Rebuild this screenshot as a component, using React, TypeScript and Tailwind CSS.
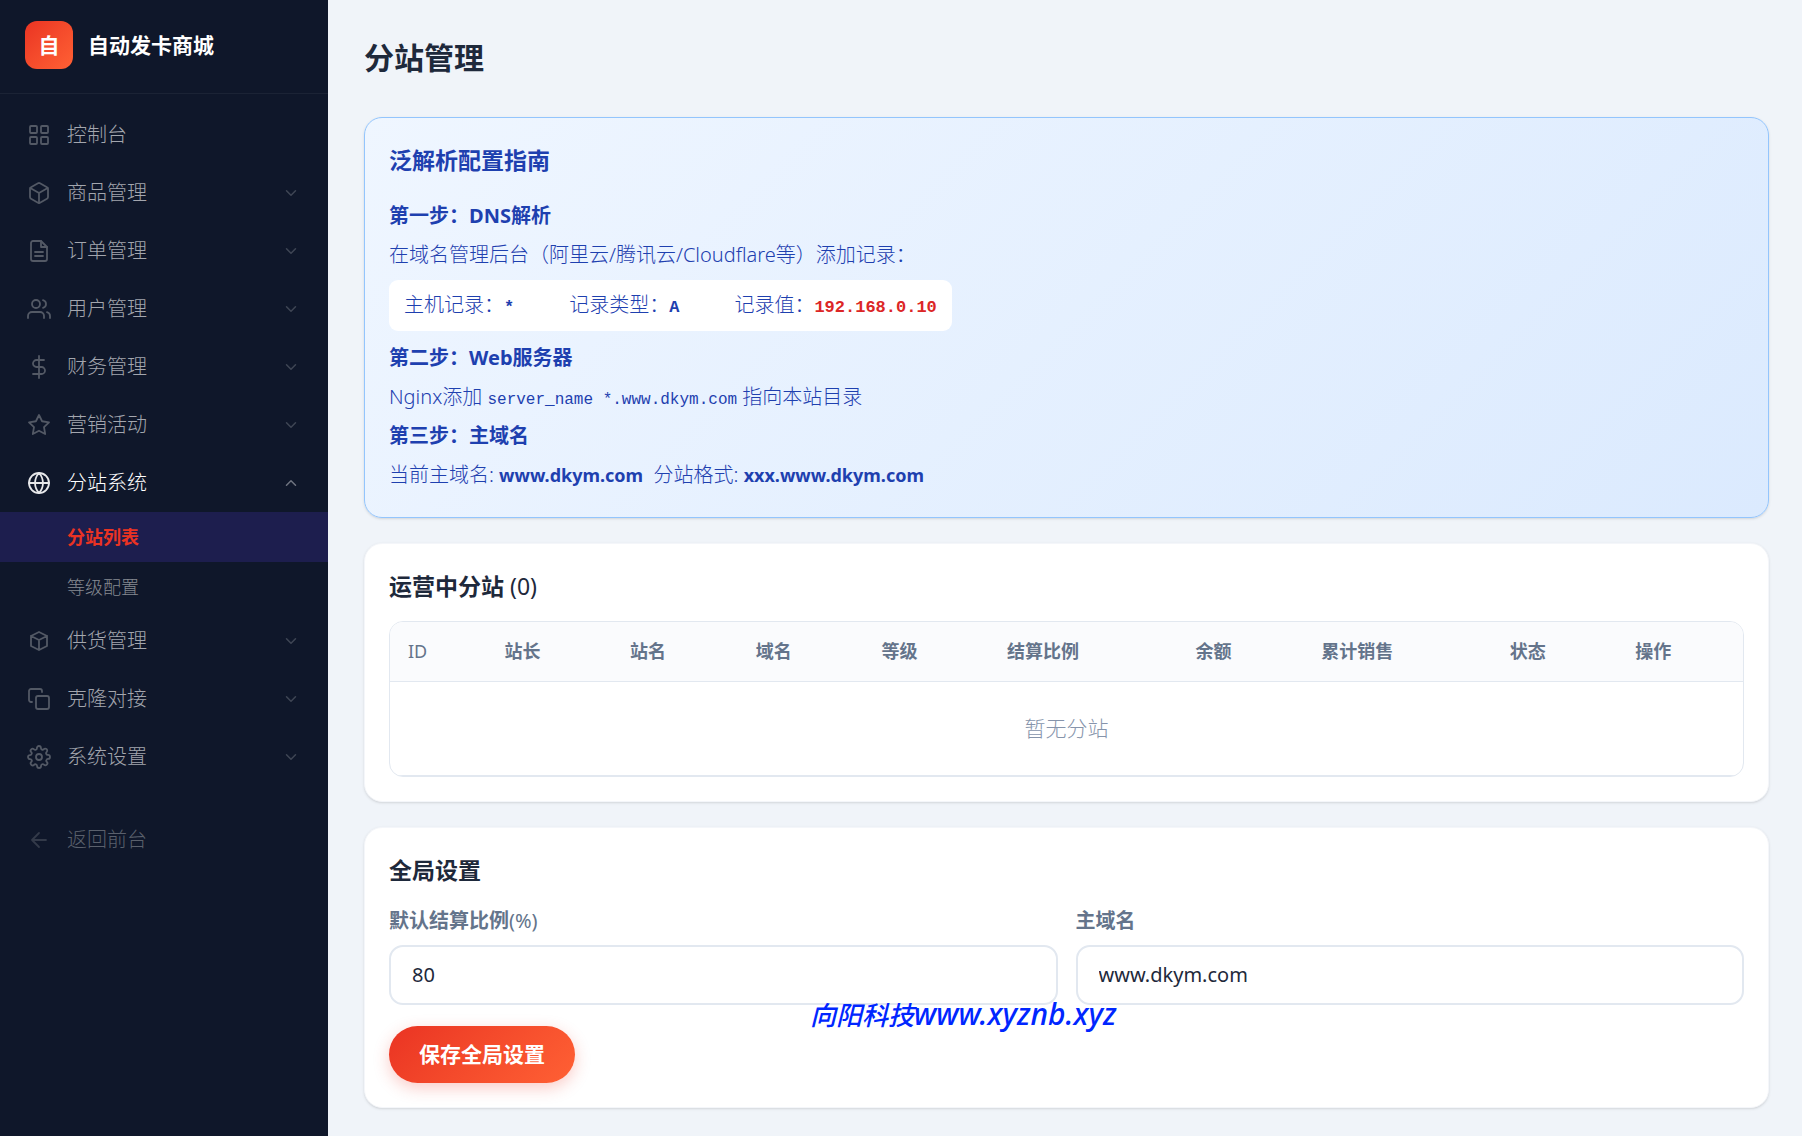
import type { ReactNode } from "react";

type NavItem = {
  label: string;
  icon: ReactNode;
  children?: { label: string; active?: boolean }[];
  open?: boolean;
  single?: boolean;
};

const Icon = ({ children }: { children: ReactNode }) => (
  <svg
    viewBox="0 0 24 24"
    className="size-6 shrink-0"
    fill="none"
    stroke="currentColor"
    strokeWidth="1.8"
    strokeLinecap="round"
    strokeLinejoin="round"
    aria-hidden="true"
  >
    {children}
  </svg>
);

const navItems: NavItem[] = [
  {
    label: "控制台",
    single: true,
    icon: (
      <>
        <rect x="3" y="3" width="7" height="7" rx="1" />
        <rect x="14" y="3" width="7" height="7" rx="1" />
        <rect x="3" y="14" width="7" height="7" rx="1" />
        <rect x="14" y="14" width="7" height="7" rx="1" />
      </>
    ),
  },
  {
    label: "商品管理",
    icon: (
      <>
        <path d="M21 16V8a2 2 0 0 0-1-1.73l-7-4a2 2 0 0 0-2 0l-7 4A2 2 0 0 0 3 8v8a2 2 0 0 0 1 1.73l7 4a2 2 0 0 0 2 0l7-4A2 2 0 0 0 21 16z" />
        <path d="M3.27 6.96 12 12.01l8.73-5.05M12 22.08V12" />
      </>
    ),
  },
  {
    label: "订单管理",
    icon: (
      <>
        <path d="M14 2H6a2 2 0 0 0-2 2v16a2 2 0 0 0 2 2h12a2 2 0 0 0 2-2V8z" />
        <path d="M14 2v6h6M16 13H8M16 17H8" />
      </>
    ),
  },
  {
    label: "用户管理",
    icon: (
      <>
        <path d="M17 21v-2a4 4 0 0 0-4-4H5a4 4 0 0 0-4 4v2" />
        <circle cx="9" cy="7" r="4" />
        <path d="M23 21v-2a4 4 0 0 0-3-3.87M16 3.13a4 4 0 0 1 0 7.75" />
      </>
    ),
  },
  {
    label: "财务管理",
    icon: <path d="M12 1v22M17 5H9.5a3.5 3.5 0 0 0 0 7h5a3.5 3.5 0 0 1 0 7H6" />,
  },
  {
    label: "营销活动",
    icon: (
      <path d="M12 2l3.09 6.26L22 9.27l-5 4.87 1.18 6.88L12 17.77l-6.18 3.25L7 14.14 2 9.27l6.91-1.01L12 2z" />
    ),
  },
  {
    label: "分站系统",
    open: true,
    icon: (
      <>
        <circle cx="12" cy="12" r="10" />
        <path d="M2 12h20M12 2a15.3 15.3 0 0 1 4 10 15.3 15.3 0 0 1-4 10 15.3 15.3 0 0 1-4-10 15.3 15.3 0 0 1 4-10z" />
      </>
    ),
    children: [{ label: "分站列表", active: true }, { label: "等级配置" }],
  },
  {
    label: "供货管理",
    icon: <path d="M20 7l-8-4-8 4m16 0l-8 4m8-4v10l-8 4m0-10L4 7m8 4v10M4 7v10l8 4" />,
  },
  {
    label: "克隆对接",
    icon: (
      <>
        <rect x="9" y="9" width="13" height="13" rx="2" />
        <path d="M5 15H4a2 2 0 0 1-2-2V4a2 2 0 0 1 2-2h9a2 2 0 0 1 2 2v1" />
      </>
    ),
  },
  {
    label: "系统设置",
    icon: (
      <>
        <circle cx="12" cy="12" r="3" />
        <path d="M19.4 15a1.65 1.65 0 0 0 .33 1.82l.06.06a2 2 0 0 1-2.83 2.83l-.06-.06a1.65 1.65 0 0 0-2.82 1.17V21a2 2 0 0 1-4 0v-.09A1.65 1.65 0 0 0 9 19.4a1.65 1.65 0 0 0-1.82.33l-.06.06a2 2 0 0 1-2.83-2.83l.06-.06a1.65 1.65 0 0 0-1.17-2.82H3a2 2 0 0 1 0-4h.09A1.65 1.65 0 0 0 4.6 9a1.65 1.65 0 0 0-.33-1.82l-.06-.06a2 2 0 0 1 2.83-2.83l.06.06a1.65 1.65 0 0 0 2.82-1.17V3a2 2 0 0 1 4 0v.09a1.65 1.65 0 0 0 2.82 1.17l.06-.06a2 2 0 0 1 2.83 2.83l-.06.06a1.65 1.65 0 0 0 1.17 2.82H21a2 2 0 0 1 0 4h-.09A1.65 1.65 0 0 0 19.4 15z" />
      </>
    ),
  },
];

const columns = [
  "ID",
  "站长",
  "站名",
  "域名",
  "等级",
  "结算比例",
  "余额",
  "累计销售",
  "状态",
  "操作",
];

const Chevron = ({ open }: { open?: boolean }) => (
  <svg
    viewBox="0 0 24 24"
    className={open ? "size-[18px] text-[#6f7480]" : "size-[18px] text-[#3f4655]"}
    fill="none"
    stroke="currentColor"
    strokeWidth="2"
    strokeLinecap="round"
    strokeLinejoin="round"
    aria-hidden="true"
  >
    <path d={open ? "M18 15l-6-6-6 6" : "M6 9l6 6 6-6"} />
  </svg>
);

const Sidebar = () => (
  <aside className="w-[328px] shrink-0 bg-[#0f172a]">
    <div className="flex items-center gap-[15px] border-b border-[#1b2335] px-[25px] pt-[21px] pb-6">
      <div className="flex size-12 items-center justify-center rounded-xl bg-linear-135 from-[#ea3323] to-[#ff6034] text-[21px] font-bold text-white">
        自
      </div>
      <span className="text-[21px] font-bold text-white">自动发卡商城</span>
    </div>

    <nav className="pt-3">
      <ul>
        {navItems.map((item) => (
          <li key={item.label}>
            <a
              href="#"
              className={
                item.open
                  ? "flex h-[58px] items-center gap-4 pr-7 pl-[27px] text-white"
                  : "flex h-[58px] items-center gap-4 pr-7 pl-[27px] text-[#a3a6ae]"
              }
            >
              <span className={item.open ? "text-[#e7e8ea]" : "text-[#535965]"}>
                <Icon>{item.icon}</Icon>
              </span>
              <span className="flex-1">{item.label}</span>
              {!item.single && <Chevron open={item.open} />}
            </a>
            {item.children && (
              <ul>
                {item.children.map((child) => (
                  <li key={child.label}>
                    <a
                      href="#"
                      className={
                        child.active
                          ? "flex h-[50px] items-center bg-[#1d1e4e] pl-[67px] text-lg font-bold text-[#ea3323]"
                          : "flex h-[50px] items-center pl-[67px] text-lg text-[#858991]"
                      }
                    >
                      {child.label}
                    </a>
                  </li>
                ))}
              </ul>
            )}
          </li>
        ))}
      </ul>
      <a
        href="#"
        className="mt-[25px] flex h-[58px] items-center gap-4 pl-[27px] text-[#5a606c]"
      >
        <span className="text-[#333a49]">
          <Icon>
            <path d="M19 12H5M12 19l-7-7 7-7" />
          </Icon>
        </span>
        返回前台
      </a>
    </nav>
  </aside>
);

const codeFont = "font-['Liberation_Mono',monospace] text-[17px] font-bold";

const Guide = () => (
  <section className="rounded-[18px] border border-[#93c5fd] bg-linear-135 from-[#eff6ff] to-[#dbeafe] px-6 pt-6 pb-[23px] leading-[39px] text-[#1e40af] shadow-sm">
    <h2 className="mb-[18px] text-[23px] leading-9 font-bold">泛解析配置指南</h2>
    <p className="font-bold">第一步：DNS解析</p>
    <p>在域名管理后台（阿里云/腾讯云/Cloudflare等）添加记录：</p>
    <div className="mt-[6px] mb-[7px] flex h-[51px] w-fit items-center gap-[55px] rounded-[9px] bg-white px-[15px]">
      <span>
        主机记录：<b className={codeFont}>*</b>
      </span>
      <span>
        记录类型：<b className={codeFont}>A</b>
      </span>
      <span className="text-[#dc2626]">
        <span className="text-[#1e40af]">记录值：</span>
        <b className={codeFont}>192.168.0.10</b>
      </span>
    </div>
    <p className="font-bold">第二步：Web服务器</p>
    <p>
      Nginx添加{" "}
      <code className="font-['Liberation_Mono',monospace] text-base">
        server_name *.www.dkym.com
      </code>{" "}
      指向本站目录
    </p>
    <p className="font-bold">第三步：主域名</p>
    <p>
      当前主域名: <b className="text-lg leading-none font-bold">www.dkym.com</b>
      &nbsp; 分站格式:{" "}
      <b className="text-lg leading-none font-bold">xxx.www.dkym.com</b>
    </p>
  </section>
);

const SiteTable = () => (
  <section className="rounded-[18px] border border-[#f4f6fa] bg-white p-6 shadow-sm">
    <h2 className="mb-4 text-[23px] leading-[37px] font-bold">
      运营中分站 <span className="font-normal">(0)</span>
    </h2>
    <div className="overflow-hidden rounded-[14px] border border-[#e2e8f0]">
      <table className="w-full">
        <thead>
          <tr className="h-[59px] border-b border-[#e2e8f0] bg-[#fafbfd] text-left text-lg text-[#64748b]">
            {columns.map((col) => (
              <th
                key={col}
                className={col === "ID" ? "px-[18px] font-normal" : "px-[18px] font-bold"}
              >
                {col}
              </th>
            ))}
          </tr>
        </thead>
        <tbody>
          <tr className="h-[94px] border-b border-[#e2e8f0]">
            <td colSpan={10} className="text-center text-[21px] text-[#8694ab]">
              暂无分站
            </td>
          </tr>
        </tbody>
      </table>
    </div>
  </section>
);

const inputClass =
  "h-[60px] w-full rounded-[14px] border-2 border-[#e2e8f0] bg-white px-[21px] font-normal text-[#1e293b] outline-none";

const Settings = () => (
  <section className="relative rounded-[18px] border border-[#f4f6fa] bg-white p-6 shadow-sm">
    <h2 className="mb-[17px] text-[23px] leading-9 font-bold">全局设置</h2>
    <form onSubmit={(e) => e.preventDefault()}>
      <div className="grid grid-cols-2 gap-[18px]">
        <div>
          <label
            htmlFor="ratio"
            className="mb-2 block leading-8 font-bold text-[#64748b]"
          >
            默认结算比例<span className="font-normal">(%)</span>
          </label>
          <input id="ratio" type="text" defaultValue="80" className={inputClass} />
        </div>
        <div>
          <label
            htmlFor="domain"
            className="mb-2 block leading-8 font-bold text-[#64748b]"
          >
            主域名
          </label>
          <input
            id="domain"
            type="text"
            defaultValue="www.dkym.com"
            className={inputClass}
          />
        </div>
      </div>
      <button
        type="submit"
        className="mt-[21px] h-[57px] rounded-full bg-linear-135 from-[#ea3323] to-[#ff6034] px-[30px] text-[21px] font-bold text-white shadow-[0_5px_16px_rgba(234,51,35,0.25)]"
      >
        保存全局设置
      </button>
    </form>

    {/* Watermark */}
    <span className="pointer-events-none absolute top-[168px] left-[445px] text-[26px] leading-9 font-medium whitespace-nowrap text-[#0026ff] italic">
      向阳科技<span className="text-[30px]">www.xyznb.xyz</span>
    </span>
  </section>
);

const App = () => {
  return (
    <div
      lang="zh-CN"
      className="flex min-h-screen bg-[#f0f4f9] font-['Noto_Sans','Noto_Sans_CJK_SC',sans-serif] text-[20px] leading-[30px] font-light text-[#1e293b]"
    >
      <Sidebar />
      <main className="min-w-0 flex-1 pt-9 pr-[33px] pb-[26px] pl-9">
        <h1 className="mb-[37px] text-[30px] leading-[44px] font-bold">分站管理</h1>
        <div className="flex flex-col gap-[25px]">
          <Guide />
          <SiteTable />
          <Settings />
        </div>
      </main>
    </div>
  );
};

export default App;
